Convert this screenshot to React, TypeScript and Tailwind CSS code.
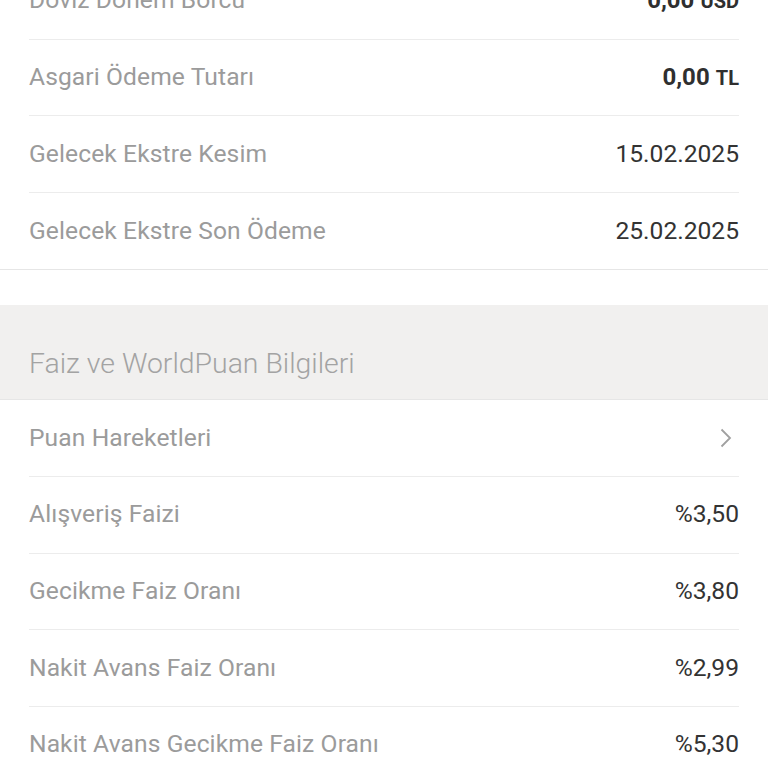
import React from 'react'

type Row = { label: string; value?: React.ReactNode; chevron?: boolean }

const topRows: Row[] = [
    { label: 'Döviz Dönem Borcu', value: <Amount num="0,00" unit="USD" /> },
    { label: 'Asgari Ödeme Tutarı', value: <Amount num="0,00" unit="TL" /> },
    { label: 'Gelecek Ekstre Kesim', value: '15.02.2025' },
    { label: 'Gelecek Ekstre Son Ödeme', value: '25.02.2025' },
]

const faizRows: Row[] = [
    { label: 'Puan Hareketleri', chevron: true },
    { label: 'Alışveriş Faizi', value: '%3,50' },
    { label: 'Gecikme Faiz Oranı', value: '%3,80' },
    { label: 'Nakit Avans Faiz Oranı', value: '%2,99' },
    { label: 'Nakit Avans Gecikme Faiz Oranı', value: '%5,30' },
]

function Amount({ num, unit }: { num: string; unit: string }) {
    return (
        <span className="font-bold text-[#2f2f2f]">
            <span className="text-[24px]">{num}</span> <span className="text-[20px]">{unit}</span>
        </span>
    )
}

function InfoRow({ row, last }: { row: Row; last?: boolean }) {
    return (
        <div className={last ? 'border-b border-[#e6e6e6]' : 'px-[29px]'}>
            <div
                className={`flex h-[76.6px] items-center justify-between ${
                    last ? 'px-[29px]' : 'border-b border-[#ececec]'
                }`}
            >
                <span className="text-[24.6px] tracking-[0.1px] text-[#9b9b9b]">{row.label}</span>
                {row.chevron ? (
                    <svg width="14" height="22" viewBox="0 0 14 22" fill="none" className="mr-[6px]">
                        <path d="M2.5 2.5l8.5 8.5-8.5 8.5" stroke="#a0a0a0" strokeWidth="1.8" />
                    </svg>
                ) : (
                    <span className="text-[24.6px] text-[#333333]">{row.value}</span>
                )}
            </div>
        </div>
    )
}

export default function App() {
    return (
        <div
            className="h-[768px] w-[768px] overflow-hidden bg-white"
            style={{ fontFamily: 'Roboto, "Liberation Sans", sans-serif' }}
        >
            <div className="-mt-[37px]">
                {topRows.map((r, i) => (
                    <InfoRow key={r.label} row={r} last={i === topRows.length - 1} />
                ))}
            </div>

            <div className="mt-[35px] flex h-[95px] items-end border-b border-[#e6e6e6] bg-[#f1f0ef] px-[29px] pb-[14px]">
                <h2 className="text-[28.4px] font-light text-[#a3a3a3]">Faiz ve WorldPuan Bilgileri</h2>
            </div>

            <div>
                {faizRows.map((r) => (
                    <InfoRow key={r.label} row={r} />
                ))}
            </div>
        </div>
    )
}
